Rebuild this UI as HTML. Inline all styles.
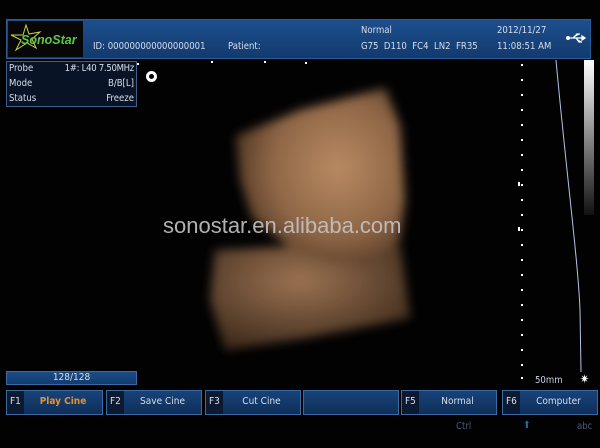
<!DOCTYPE html>
<html><head><meta charset="utf-8"><style>
*{margin:0;padding:0;box-sizing:border-box}
body{width:600px;height:448px;background:#020203;position:relative;overflow:hidden;font-family:"DejaVu Sans Condensed","Liberation Sans",sans-serif;color:#d8dde8}
.a{position:absolute}
.hdr{left:6px;top:19px;width:585px;height:40px;background:linear-gradient(#1d4f8e,#123a6e);border:1px solid #2c5c98}
.t{font-size:9.5px;white-space:nowrap}
.btn{position:absolute;top:390px;height:25px;border:1px solid #3b6aa3;background:linear-gradient(#17437a,#0f2f58)}
.btn .k{position:absolute;left:0;top:0;width:17px;height:23px;background:#0b1a30;font-size:10px;padding:5px 0 0 3px}
.btn .l{position:absolute;left:17px;right:0;top:5px;text-align:center;font-size:10px}
</style></head><body>
<div class="a hdr"></div>
<div class="a" style="left:8px;top:21px;width:75px;height:36px;background:#070707"></div>
<svg class="a" style="left:8px;top:21px" width="75" height="36"><polygon points="18,4 21,13 32,11 24,18 28,27 19,22 8,29 13,19 3,14 15,14" fill="none" stroke="#c8d34a" stroke-width="1"/></svg>
<div class="a" style="left:21px;top:33px;font:italic bold 12.5px 'Liberation Sans',sans-serif;color:#5cc64a">SonoStar</div>
<div class="a t" style="left:93px;top:41px">ID: 000000000000000001</div>
<div class="a t" style="left:228px;top:41px">Patient:</div>
<div class="a t" style="left:361px;top:25px">Normal</div>
<div class="a t" style="left:361px;top:41px">G75&nbsp; D110&nbsp; FC4&nbsp; LN2&nbsp; FR35</div>
<div class="a t" style="left:497px;top:25px">2012/11/27</div>
<div class="a t" style="left:497px;top:41px">11:08:51 AM</div>
<svg class="a" style="left:565px;top:31px" width="22" height="14"><path d="M2,7 H20 M8,7 L12,3 H15 M11,7 L14,11 H17 M20,7 L17,5 V9Z" stroke="#fff" stroke-width="1.3" fill="#fff"/><circle cx="3" cy="7" r="2" fill="#fff"/></svg>
<div class="a" style="left:6px;top:61px;width:131px;height:46px;border:1px solid #3e5f8c;background:#081426"></div>
<div class="a t" style="left:9px;top:63px">Probe</div><div class="a t" style="left:58px;top:63px;width:76px;text-align:right;letter-spacing:-0.3px">1#: L40 7.50MHz</div>
<div class="a t" style="left:9px;top:78px">Mode</div><div class="a t" style="left:62px;top:78px;width:72px;text-align:right">B/B[L]</div>
<div class="a t" style="left:9px;top:93px">Status</div><div class="a t" style="left:62px;top:93px;width:72px;text-align:right">Freeze</div>
<div class="a" style="left:146px;top:71px;width:11px;height:11px;border:3px solid #fff;border-radius:50%"></div>
<svg class="a" style="left:0;top:0" width="600" height="448">
<defs><filter id="b"><feGaussianBlur stdDeviation="5"/></filter>
<radialGradient id="g" cx="0.6" cy="0.45" r="0.65"><stop offset="0" stop-color="#b88a62"/><stop offset="0.6" stop-color="#8e6646"/><stop offset="1" stop-color="#4a3220"/></radialGradient>
<radialGradient id="g2" cx="0.45" cy="0.35" r="0.7"><stop offset="0" stop-color="#9a7252"/><stop offset="1" stop-color="#3e2a1a"/></radialGradient></defs>
<g filter="url(#b)">
<polygon points="215,250 300,246 400,244 410,318 305,338 225,350 210,300" fill="url(#g2)"/>
<polygon points="236,136 300,110 385,88 400,125 405,200 400,240 370,265 330,262 290,248 252,218 240,180" fill="url(#g)"/>
</g>
<path d="M556,60 C566,170 578,260 580,310 L581,372" stroke="#b9c0e8" stroke-width="1" fill="none"/>
<g fill="#fff">
<rect x="521" y="64" width="2" height="2"/><rect x="521" y="79" width="2" height="2"/><rect x="521" y="94" width="2" height="2"/><rect x="521" y="109" width="2" height="2"/><rect x="521" y="124" width="2" height="2"/><rect x="521" y="139" width="2" height="2"/><rect x="521" y="154" width="2" height="2"/><rect x="521" y="169" width="2" height="2"/><rect x="518" y="182" width="2" height="4"/><rect x="521" y="184" width="2" height="2"/><rect x="521" y="199" width="2" height="2"/><rect x="521" y="214" width="2" height="2"/><rect x="518" y="227" width="2" height="4"/><rect x="521" y="229" width="2" height="2"/><rect x="521" y="244" width="2" height="2"/><rect x="521" y="259" width="2" height="2"/><rect x="521" y="274" width="2" height="2"/><rect x="521" y="289" width="2" height="2"/><rect x="521" y="304" width="2" height="2"/><rect x="521" y="319" width="2" height="2"/><rect x="521" y="334" width="2" height="2"/><rect x="521" y="349" width="2" height="2"/><rect x="521" y="364" width="2" height="2"/><rect x="521" y="377" width="2" height="2"/>
<rect x="137" y="63" width="2" height="2"/><rect x="211" y="61" width="2" height="2"/><rect x="264" y="61" width="2" height="2"/><rect x="305" y="62" width="2" height="2"/>
</g>
<defs><linearGradient id="gb" x1="0" y1="0" x2="0" y2="1"><stop offset="0" stop-color="#fff"/><stop offset="1" stop-color="#111"/></linearGradient></defs>
<rect x="584" y="60" width="10" height="155" fill="url(#gb)"/>
</svg>
<div class="a" style="left:163px;top:213px;font:22px 'Liberation Sans',sans-serif;color:#c4c4c4;opacity:.9">sonostar.en.alibaba.com</div>
<div class="a" style="left:6px;top:371px;width:131px;height:14px;border:1px solid #3b6aa3;background:linear-gradient(#1c4c86,#133d70);font-size:10px;text-align:center;line-height:12px">128/128</div>
<div class="a t" style="left:535px;top:375px;color:#c8cde0">50mm</div>
<div class="a" style="left:580px;top:372px;color:#fff;font-size:12px">✷</div>
<div class="btn" style="left:6px;width:97px"><div class="k">F1</div><div class="l" style="color:#e8902e;font-weight:bold">Play Cine</div></div>
<div class="btn" style="left:106px;width:96px"><div class="k">F2</div><div class="l">Save Cine</div></div>
<div class="btn" style="left:205px;width:96px"><div class="k">F3</div><div class="l">Cut Cine</div></div>
<div class="btn" style="left:303px;width:96px"></div>
<div class="btn" style="left:401px;width:96px"><div class="k">F5</div><div class="l">Normal</div></div>
<div class="btn" style="left:502px;width:96px"><div class="k">F6</div><div class="l">Computer</div></div>
<div class="a t" style="left:456px;top:421px;color:#4a5a78">Ctrl</div>
<div class="a" style="left:523px;top:420px;color:#2f63a8;font-size:10px">⬆</div>
<div class="a t" style="left:577px;top:421px;color:#4a5a78">abc</div>
</body></html>
